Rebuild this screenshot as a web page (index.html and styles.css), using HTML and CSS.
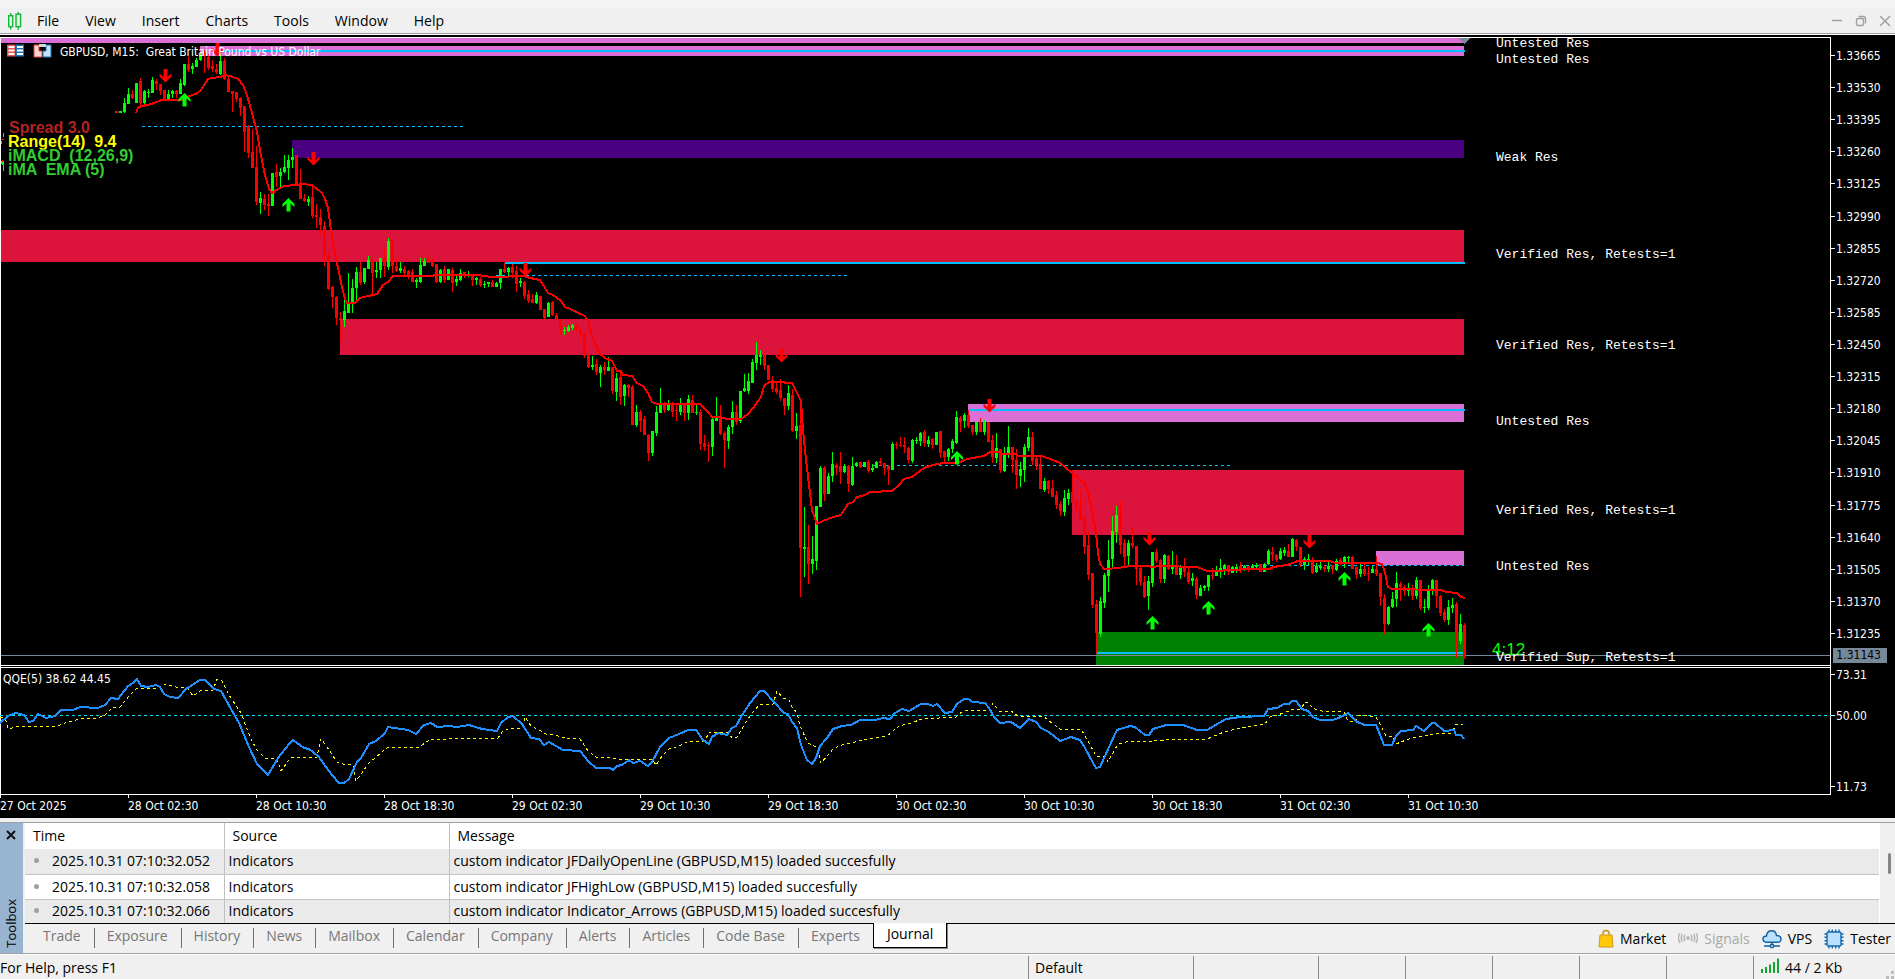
FILE: index.html
```html
<!DOCTYPE html>
<html lang="en">
<head>
<meta charset="utf-8">
<title>GBPUSD, M15</title>
<link rel="stylesheet" href="styles.css">
</head>
<body>
<header class="menubar">
  <svg class="app-icon" width="16" height="20" viewBox="0 0 16 20" fill="none" stroke="#12b73a" stroke-width="1.4"><rect x="1.7" y="4.7" width="4" height="11" fill="#dff8e2"/><path d="M3.7 2v3M3.700 15.500v3"/><rect x="9" y="3.200" width="4.600" height="12.500" fill="#dff8e2"/><path d="M11.300 1v2M11.300 15.700v3"/></svg>
  <nav class="menus">
    <button type="button">File</button><button type="button">View</button><button type="button">Insert</button><button type="button">Charts</button><button type="button">Tools</button><button type="button">Window</button><button type="button">Help</button>
  </nav>
  <div class="window-buttons">
    <button type="button" aria-label="Minimize"><svg width="12" height="12" viewBox="0 0 12 12"><path d="M1 5.500h10" stroke="#a0a0a0" stroke-width="1.500"/></svg></button>
    <button type="button" aria-label="Restore"><svg width="12" height="12" viewBox="0 0 12 12" fill="none" stroke="#a0a0a0" stroke-width="1.400"><rect x="1.500" y="3.500" width="7" height="7" rx="1.500"/><path d="M3.500 1.500h4.500q2.500 0 2.500 2.500v4.500"/></svg></button>
    <button type="button" aria-label="Close"><svg width="12" height="12" viewBox="0 0 12 12"><path d="M1 1l10 10M11 1L1 11" stroke="#a0a0a0" stroke-width="1.500"/></svg></button>
  </div>
</header>

<main class="chart">
  <svg class="plot" viewBox="0 35 1831 760" preserveAspectRatio="xMinYMin meet">
    <defs>
      <path id="up" d="M0 0L6 6V9L2 5.500V13.500H-2V5.500L-6 9V6Z" fill="#00ff00"/>
      <path id="down" d="M0 13.500L6 7.500V4.500L2 8V0H-2V8L-6 4.500V7.500Z" fill="#ff0000"/>
      <clipPath id="main-clip"><rect x="0" y="37" width="1830" height="628"/></clipPath>
    </defs>
    <g shape-rendering="crispEdges">
      <rect class="violet" x="1" y="38" width="1463" height="5"/>
      <rect class="violet" x="200" y="46" width="1264" height="10"/>
      <rect class="indigo" x="292" y="140" width="1172" height="18"/>
      <rect class="crimson" x="1" y="230" width="1463" height="32"/>
      <rect class="crimson" x="340" y="319" width="1124" height="36"/>
      <rect class="violet" x="968" y="404" width="496" height="18"/>
      <rect class="crimson" x="1072" y="470" width="392" height="65"/>
      <rect class="violet" x="1376" y="551" width="88" height="14"/>
      <rect class="green" x="1096" y="632" width="368" height="33"/>
      <path class="level" d="M218 51H1465M505 263H1465M969 410H1465M1097 653H1463"/>
      <path class="open-line" d="M142 126.500H463M496 275.500H848M855 465.500H1231M1240 565.500H1464"/>
      <path d="M0 655.500H1830" stroke="#778899"/>
      <path d="M1459 38H1470L1464.500 44Z" fill="#778899"/>
      <path d="M1 139.500H4M2.500 160V163" stroke="#ff0000"/>
      <path d="M3.500 133V137M1.500 141V144M3.500 161V171" stroke="#00ff00"/>
      <path d="M0 160L4 164V167L0 163Z" fill="#00ff00"/>
      <g id="candles" clip-path="url(#main-clip)"></g>
      <polyline class="average" points="136,113 138,108 141,106 148,105 154,103 162,100 183,100 189,96 196,94 201,90 208,79 212,78 221,77 224,75 230,76 238,79 243,85 247,95 252,113 257,132 260,150 265,175 269,189 272,193 278,189 284,186 297,185 302,184 312,185 317,189 322,193 325,199 328,208 332,238 337,263 342,287 345,299 347,303 355,303 360,298 377,294 383,285 388,282 393,276 433,276 434,275 480,275 482,276 493,277 508,277 510,276 524,276 530,278 540,280 545,288 548,293 553,295 561,301 565,307 570,309 585,316 588,321 592,337 600,354 605,358 612,361 617,371 621,371 623,375 632,376 637,383 643,386 648,393 652,402 657,404 700,404 708,412 712,417 720,417 727,419 741,419 748,414 753,408 761,397 764,386 769,382 783,382 786,383 792,383 797,393 801,401 803,430 806,460 810,493 812,510 817,524 823,521 833,517 841,515 848,504 853,502 857,497 865,495 870,492 892,491 899,485 904,479 912,477 924,468 933,465 943,463 958,463 967,459 984,456 990,452 998,452 1003,454 1015,454 1019,456 1041,456 1048,458 1060,463 1072,473 1082,481 1085,483 1088,493 1092,510 1096,533 1098,553 1100,564 1104,569 1120,568 1122,567 1133,566 1148,566 1153,567 1160,566 1197,567 1207,571 1240,570 1243,569 1270,569 1273,567 1287,565 1298,561 1330,561 1335,563 1377,563 1382,564 1385,572 1388,587 1392,589 1440,590 1447,592 1457,593 1461,597 1465,598"/>
      <path d="M0.500 795V37.500H1830.500V795M0 665.500H1831M0 667.500H1831M0 794.500H1831" fill="none" stroke="#fff"/>
      <path d="M0 715.500H1831" stroke="#00e5e5" stroke-dasharray="3 3"/>
      <polyline class="qqe-slow" points="0,717 5,718 8,728 12,728 16,726 57,726 65,723 80,719 98,718 105,715 112,708 120,707 129,696 137,688 159,688 164,684 176,687 188,688 193,696 200,691 213,690 217,679 222,681 229,695 241,713 250,737 257,750 265,758 277,759 281,771 291,757 317,757 321,739 327,747 337,762 343,764 353,765 356,781 369,763 388,747 419,747 431,739 449,739 469,738 498,738 502,732 510,728 522,728 525,717 531,726 539,730 546,734 555,735 565,738 580,739 588,751 596,757 608,757 616,759 652,759 656,765 662,756 669,749 679,746 689,741 705,741 709,732 728,732 732,738 737,737 744,725 752,713 760,704 773,704 777,691 783,698 789,700 792,707 797,713 800,726 808,743 818,748 821,763 834,748 842,745 852,743 862,740 887,736 899,726 911,723 922,719 956,717 964,710 989,710 993,703 999,711 1011,711 1018,716 1044,717 1060,729 1081,729 1089,743 1096,756 1105,756 1108,762 1118,744 1130,741 1154,741 1175,739 1207,739 1224,732 1240,728 1265,724 1270,717 1284,713 1293,709 1301,709 1305,702 1309,703 1312,708 1322,711 1344,712 1348,721 1356,721 1359,715 1376,717 1380,724 1386,736 1393,737 1396,744 1406,740 1416,737 1435,734 1452,733 1456,724 1463,724"/>
      <polyline class="qqe-fast" points="0,723 8,716 16,713 24,715 29,722 33,721 38,714 46,718 55,716 61,710 73,710 80,707 98,708 105,705 111,698 118,699 128,686 133,683 137,679 141,686 148,687 156,685 160,687 164,694 170,697 178,698 186,689 200,680 205,680 214,689 221,691 231,709 239,723 249,747 257,764 268,775 278,758 289,744 293,740 304,748 309,749 318,756 332,775 339,783 344,783 349,779 357,762 361,758 369,744 376,741 385,733 388,727 408,730 416,734 424,725 431,723 437,727 449,726 457,727 469,725 482,729 497,731 501,723 508,717 513,716 522,724 531,738 539,739 544,745 549,742 563,750 580,751 589,762 596,768 610,768 613,770 617,766 622,765 629,760 633,763 640,761 648,766 652,762 660,747 669,738 679,734 688,730 696,730 703,740 709,744 712,737 718,733 727,735 732,728 736,726 741,717 750,703 760,691 764,691 775,703 784,713 788,714 792,722 797,728 801,745 807,760 812,764 816,758 820,746 827,738 833,729 842,726 851,725 860,720 875,720 883,718 890,719 895,713 902,709 909,711 921,704 928,704 933,706 937,704 945,713 952,712 957,704 964,699 968,699 973,702 985,703 989,708 994,717 1000,723 1011,722 1020,728 1029,719 1036,722 1041,728 1049,732 1060,741 1071,737 1080,740 1085,748 1093,763 1096,768 1100,767 1109,747 1117,730 1130,726 1135,727 1145,735 1149,735 1153,729 1166,725 1183,725 1197,730 1207,730 1226,719 1240,717 1264,716 1268,709 1277,708 1284,704 1289,704 1292,701 1296,701 1302,709 1308,711 1313,717 1320,720 1333,720 1341,717 1348,713 1357,722 1365,725 1376,725 1379,732 1384,745 1392,745 1396,736 1401,731 1413,730 1416,726 1424,731 1432,723 1435,723 1444,731 1454,730 1456,735 1461,735 1464,739"/>
    </g>
    <use href="#down" x="165.500" y="69"/><use href="#down" x="217.500" y="43"/><use href="#down" x="313.500" y="152"/><use href="#down" x="525.500" y="263"/><use href="#down" x="781.500" y="349"/><use href="#down" x="989.500" y="399"/><use href="#down" x="1149.500" y="532"/><use href="#down" x="1309.500" y="535"/>
    <use href="#up" x="184.500" y="93"/><use href="#up" x="288.500" y="198"/><use href="#up" x="957" y="451"/><use href="#up" x="1152.500" y="616"/><use href="#up" x="1208.500" y="601"/><use href="#up" x="1344.500" y="572"/><use href="#up" x="1428.500" y="623"/>
    <g transform="translate(6 44)">
      <path d="M1 0.500h8.500v12H1z" fill="#e8534e"/><path d="M9.500 0.500H18v12H9.500z" fill="#2474b5"/><path d="M2.500 3h6M2.500 6.500h6M2.500 10h6M11 3h6M11 6.500h6M11 10h6" stroke="#fff" stroke-width="2"/>
    </g>
    <g transform="translate(33 44)">
      <path d="M1 1h5v6h3v6H1z" fill="#ffd4d0" stroke="#e2443e"/><path d="M18 1h-5v6h-3v6h8z" fill="#bfe2ff" stroke="#2474b5"/><path d="M6 0h7v3H6z" fill="#d8d8d8"/>
    </g>
    <text class="caption" x="60" y="56" xml:space="preserve">GBPUSD, M15:  Great Britain Pound vs US Dollar</text>
    <g class="readout">
      <text x="9" y="133" fill="#b22222">Spread 3.0</text>
      <text x="8" y="147" fill="#ffff00" xml:space="preserve">Range(14)  9.4</text>
      <text x="8" y="161" fill="#32cd32" xml:space="preserve">iMACD  (12,26,9)</text>
      <text x="8" y="175" fill="#32cd32" xml:space="preserve">iMA  EMA (5)</text>
    </g>
    <text class="timer" x="1492" y="655">4:12</text>
    <g class="zone-label">
      <text x="1496" y="47">Untested Res</text>
      <text x="1496" y="63">Untested Res</text>
      <text x="1496" y="161">Weak Res</text>
      <text x="1496" y="258">Verified Res, Retests=1</text>
      <text x="1496" y="349">Verified Res, Retests=1</text>
      <text x="1496" y="425">Untested Res</text>
      <text x="1496" y="514">Verified Res, Retests=1</text>
      <text x="1496" y="570">Untested Res</text>
      <text x="1496" y="661">Verified Sup, Retests=1</text>
    </g>
    <text class="caption" x="3" y="683">QQE(5) 38.62 44.45</text>
  </svg>
  <ul class="price-axis">
    <li>1.33665</li><li>1.33530</li><li>1.33395</li><li>1.33260</li><li>1.33125</li><li>1.32990</li><li>1.32855</li><li>1.32720</li><li>1.32585</li><li>1.32450</li><li>1.32315</li><li>1.32180</li><li>1.32045</li><li>1.31910</li><li>1.31775</li><li>1.31640</li><li>1.31505</li><li>1.31370</li><li>1.31235</li>
  </ul>
  <span class="price-now">1.31143</span>
  <ul class="qqe-axis"><li>73.31</li><li>50.00</li><li>11.73</li></ul>
  <ul class="time-axis">
    <li>27 Oct 2025</li><li>28 Oct 02:30</li><li>28 Oct 10:30</li><li>28 Oct 18:30</li><li>29 Oct 02:30</li><li>29 Oct 10:30</li><li>29 Oct 18:30</li><li>30 Oct 02:30</li><li>30 Oct 10:30</li><li>30 Oct 18:30</li><li>31 Oct 02:30</li><li>31 Oct 10:30</li>
  </ul>
</main>

<section class="toolbox">
  <div class="toolbox-strip">
    <button type="button" aria-label="Close"><svg width="10" height="10" viewBox="0 0 10 10"><path d="M1 1l8 8M9 1L1 9" stroke="#111" stroke-width="2"/></svg></button>
    <span class="toolbox-title">Toolbox</span>
  </div>
  <div class="toolbox-body">
    <div class="log">
      <table>
        <thead><tr><th class="col-time">Time</th><th class="col-source">Source</th><th>Message</th></tr></thead>
        <tbody>
          <tr><td><i class="dot"></i>2025.10.31 07:10:32.052</td><td>Indicators</td><td>custom indicator JFDailyOpenLine (GBPUSD,M15) loaded succesfully</td></tr>
          <tr><td><i class="dot"></i>2025.10.31 07:10:32.058</td><td>Indicators</td><td>custom indicator JFHighLow (GBPUSD,M15) loaded succesfully</td></tr>
          <tr><td><i class="dot"></i>2025.10.31 07:10:32.066</td><td>Indicators</td><td>custom indicator Indicator_Arrows (GBPUSD,M15) loaded succesfully</td></tr>
        </tbody>
      </table>
      <div class="scrollbar"><div class="thumb"></div></div>
    </div>
    <div class="tabbar">
      <nav class="tabs">
        <button type="button">Trade</button><button type="button">Exposure</button><button type="button">History</button><button type="button">News</button><button type="button">Mailbox</button><button type="button">Calendar</button><button type="button">Company</button><button type="button">Alerts</button><button type="button">Articles</button><button type="button">Code Base</button><button type="button">Experts</button><button type="button" class="active">Journal</button>
      </nav>
      <div class="services">
        <button type="button"><svg width="16" height="20" viewBox="0 0 16 20"><path d="M5 7V4.500Q5 1.500 8 1.500T11 4.500V7" fill="none" stroke="#c8901c" stroke-width="1.500"/><path d="M2 6h12l1 12H1z" fill="#ffc80a" stroke="#d39a10"/></svg>Market</button>
        <button type="button" class="off" disabled><svg width="20" height="20" viewBox="0 0 20 20" fill="none" stroke="#b4b4b4" stroke-width="1.400"><circle cx="10" cy="9" r="1.200"/><path d="M7 6q-2 3 0 6M13 6q2 3 0 6M4.500 5q-2.500 4 0 8M15.500 5q2.500 4 0 8M2 4q-3 5 0 10M18 4q3 5 0 10"/></svg>Signals</button>
        <button type="button"><svg width="20" height="20" viewBox="0 0 20 20" fill="none" stroke="#15609c" stroke-width="1.400"><path d="M4.500 13.300Q1 13 1 10T4.500 7Q5 1.800 9.500 1.800T14.500 6.500Q19 6.500 19 10T15.500 13.300Z" fill="#b9e0ff"/><path d="M10 13.500v3M2 17h6M12 17h6"/><circle cx="10" cy="17" r="1.700"/></svg>VPS</button>
        <button type="button"><svg width="20" height="20" viewBox="0 0 20 20" stroke="#1469ad" stroke-width="1.400"><path d="M5 .5v19M8.300.5v19M11.700.5v19M15 .5v19M.5 5h19M.5 8.300h19M.5 11.700h19M.5 15h19"/><rect x="3" y="3" width="14" height="14" rx="1.500" fill="#b9e0ff"/></svg>Tester</button>
      </div>
    </div>
  </div>
</section>

<footer class="statusbar">
  <span class="help">For Help, press F1</span>
  <span class="cell profile">Default</span>
  <span class="cell wide"></span><span class="cell"></span><span class="cell"></span><span class="cell"></span><span class="cell"></span><span class="cell"></span>
  <span class="cell traffic"><svg width="18" height="16" viewBox="0 0 18 16" fill="#12a830"><path d="M0 11h2v4H0zM4 9h2v6H4zM8 6.500h2V15H8zM12 4h2v11h-2zM16 .5h2V15h-2z"/></svg>44 / 2 Kb</span>
  <svg class="grip" width="8" height="8" viewBox="0 0 8 8" fill="#bcbcbc"><path d="M5 0h3v3H5zM5 5h3v3H5zM0 5h3v3H0z"/></svg>
</footer>
<script src="chart.js"></script>
</body>
</html>
```

FILE: styles.css
```css
* { box-sizing: border-box; }

body {
  margin: 0;
  min-height: 100vh;
  display: flex;
  flex-direction: column;
  background: #f0f0f0;
  color: #000;
  font: 14px/20px "Open Sans", "Noto Sans", sans-serif;
}

button {
  margin: 0;
  padding: 0;
  border: 0;
  background: none;
  color: inherit;
  font: inherit;
}

ul { margin: 0; padding: 0; list-style: none; }
svg { display: block; flex: none; }

/* Menu bar */
.menubar {
  flex: none;
  display: flex;
  align-items: center;
  height: 35px;
  padding: 8px 4px 0 7px;
  border-bottom: 1px solid #fff;
  box-shadow: inset 0 8px #f3f3f3, inset 0 -1px #a0a0a8;
}
.menus { display: flex; gap: 26px; padding-left: 14px; }
.window-buttons { display: flex; gap: 12px; margin-left: auto; }

/* Chart */
.chart {
  position: relative;
  flex: 1 0 auto;
  display: grid;
  grid-template-columns: minmax(0, 1fr) 64px;
  grid-template-rows: minmax(0, 1fr) 129px 23px;
  min-height: 783px;
  background: #000;
  color: #fff;
  font: 12px/16px "DejaVu Sans Condensed", "Noto Sans", sans-serif;
}
.plot { grid-area: 1 / 1 / 3 / 2; width: 100%; height: 100%; }
.violet { fill: #da70d6; }
.indigo { fill: #4b0082; }
.crimson { fill: #dc143c; }
.green { fill: #008000; }
.level { stroke: #00bfff; stroke-width: 2; }
.open-line { stroke: #00bfff; stroke-dasharray: 3 3; }
.average, .qqe-fast, .qqe-slow { fill: none; stroke: #ff0000; stroke-width: 2; }
.qqe-fast { stroke: #1e90ff; }
.qqe-slow { stroke: #ffff00; stroke-width: 1; stroke-dasharray: 3 3; }
.caption { fill: #fff; }
.readout { font: bold 16px "Liberation Sans", Arial, sans-serif; }
.timer { fill: #00ff00; font: 17px "Liberation Sans", Arial, sans-serif; }
.zone-label { fill: #fff; font: 13px "Liberation Mono", "Courier New", monospace; }

.price-axis {
  grid-area: 1 / 2;
  display: flex;
  flex-direction: column;
  justify-content: space-between;
  padding: 13px 0 24px;
}
.qqe-axis {
  grid-area: 2 / 2;
  display: grid;
  grid-template-rows: 41px 1fr 16px;
  padding-top: 1px;
}
.price-axis li::before, .qqe-axis li::before {
  content: "";
  display: inline-block;
  width: 4px;
  height: 1px;
  margin-right: 1px;
  vertical-align: 4px;
  background: #fff;
}
.price-now {
  position: absolute;
  right: 8px;
  bottom: 155px;
  padding: 0 6px 0 3px;
  background: #778899;
  color: #000;
  line-height: 15px;
}
.time-axis { grid-area: 3 / 1 / 4 / 3; display: flex; overflow: hidden; }
.time-axis li { flex: none; width: 128px; white-space: nowrap; }
.time-axis li::before { content: ""; display: block; width: 1px; height: 3px; background: #fff; }

/* Toolbox */
.toolbox {
  flex: none;
  display: flex;
  margin-top: 4px;
  border-top: 1px solid #a0a0a0;
  border-bottom: 1px solid #a0a0a0;
}
.toolbox-strip {
  display: flex;
  flex-direction: column;
  justify-content: space-between;
  align-items: center;
  width: 23px;
  padding: 7px 2px 5px 0;
  background: #99b4d1;
}
.toolbox-title { writing-mode: vertical-rl; transform: rotate(180deg); font-size: 13px; line-height: 16px; }
.toolbox-body { flex: 1; min-width: 0; padding-left: 2px; }
.log { display: flex; height: 101px; border-bottom: 1px solid #000; background: #fff; }
table { flex: 1; border-collapse: collapse; table-layout: fixed; white-space: nowrap; }
th, td { padding: 0 0 0 4px; border-left: 1px solid #c0c0c0; font-weight: normal; text-align: left; }
th { height: 26px; padding-left: 8px; }
td { height: 25px; border-bottom: 1px solid #c4c4c4; }
th:first-child, td:first-child { border-left: 0; }
.col-time { width: 199px; }
.col-source { width: 225px; }
tbody tr:nth-child(odd) { background: #eaeaea; }
tbody tr:last-child td { height: 24px; border-bottom: 0; }
.dot { display: inline-block; width: 5px; height: 5px; margin: 0 13px 3px 5px; border-radius: 50%; background: #a0a0a0; }
.scrollbar { width: 16px; padding: 30px 4px 0 8px; border-left: 1px solid #fff; background: #f0f0f0; }
.thumb { width: 3px; height: 21px; border-radius: 2px; background: #868686; }

.tabbar { display: flex; justify-content: space-between; height: 29px; }
.tabs { display: flex; align-items: flex-start; padding-left: 5px; color: #777; }
.tabs button { position: relative; height: 25px; padding: 0 13px 2px; white-space: nowrap; }
.tabs button + button:not(.active)::before { content: ""; position: absolute; left: 0; top: 4px; width: 1px; height: 20px; background: #707070; }
.tabs .active {
  margin-top: -1px;
  border: 1px solid #000;
  border-top: 0;
  background: #fff;
  box-shadow: 1px 1px #888;
  color: #000;
}
.services { display: flex; align-items: center; gap: 12px; padding-right: 4px; }
.services button { display: flex; align-items: center; gap: 6px; }
.services .off { color: #a8a8a8; }

/* Status bar */
.statusbar { flex: none; position: relative; display: flex; height: 25px; border-top: 1px solid #fff; }
.help { flex: 1; padding-top: 3px; }
.cell { width: 87px; margin-top: 1px; padding-top: 2px; border-left: 1px solid #888; }
.profile { width: 165px; padding-left: 6px; }
.wide { width: 125px; }
.traffic { display: flex; gap: 6px; width: 142px; padding-left: 7px; }
.grip { position: absolute; right: 1px; bottom: 0; }
```

FILE: chart.js
```javascript
// Candles from left to right: colour, then high, body top, body bottom, low.
const candles = `
r111 111 113 113,g111 111 113 113,g98 103 112 113,g88 94 104 104,r90 94 98 99,g83 83 103 103,r78 81 103 105,g90 91 103 104,g89 92 93 98,g77 80 93 93,
r79 81 84 90,r84 84 91 95,r90 90 100 101,g90 94 99 101,g90 91 94 98,r90 91 94 98,g79 83 94 94,g64 64 85 86,r57 64 70 72,g63 66 69 74,
g58 60 67 67,g53 55 60 61,r50 52 56 73,r54 57 68 70,r60 66 69 72,r64 69 72 74,g55 61 74 75,r58 61 79 80,r75 79 92 92,r91 91 94 112,
r92 92 99 102,r97 98 108 116,r106 106 132 152,r125 126 153 158,r129 152 168 168,r146 167 202 205,g192 198 203 214,r194 199 205 210,r194 204 206 216,g173 173 206 206,
r164 172 177 187,g168 172 176 187,g155 167 172 173,g155 160 168 180,g148 157 160 168,r155 155 184 184,r169 183 199 199,r194 198 201 202,g196 199 202 206,r187 197 216 218,
r204 215 217 228,r209 217 225 235,r221 226 256 266,r252 255 289 290,r286 287 297 308,r296 297 318 325,r312 318 320 342,g295 311 320 327,g273 302 313 313,g279 288 303 313,
g267 272 288 300,r262 272 283 285,g268 268 282 284,g256 260 269 269,r259 260 273 295,g262 270 272 278,g258 258 270 278,r249 258 266 277,g238 241 267 270,r240 240 266 273,
r258 266 271 272,g262 268 271 273,r266 269 273 275,r270 271 277 279,r269 272 282 282,g278 280 282 288,g258 265 282 283,g258 261 266 266,r255 260 263 263,r259 261 266 267,
r264 264 282 283,g269 270 282 283,r266 269 280 283,g269 269 280 280,r268 270 283 292,g275 279 282 286,g269 273 280 281,r272 272 276 278,g271 274 275 277,r275 275 280 286,
g277 278 280 285,r277 279 285 287,g281 284 285 288,g282 282 284 287,r280 282 287 287,g282 283 287 287,g269 269 283 289,r263 269 272 273,g267 268 272 276,r264 267 273 278,
r266 271 284 292,g278 281 283 287,r281 282 296 299,r290 294 301 303,r294 299 303 303,g292 295 303 304,r296 296 310 310,r309 309 318 319,g302 303 317 317,r301 302 315 316,
r313 315 320 320,r319 319 330 335,g327 330 331 335,g325 327 331 332,g324 325 328 330,r325 326 330 332,r329 329 335 337,r333 334 356 358,r354 354 367 368,g356 365 367 370,
r359 364 372 375,g365 367 373 387,r362 367 370 375,g357 367 371 371,r367 367 391 394,g373 378 392 401,r371 377 397 405,g384 385 396 406,r384 385 388 397,r385 387 425 425,
g405 412 425 427,r410 412 421 432,r416 419 435 435,r434 435 453 461,g431 431 453 456,g406 412 433 436,g388 404 413 413,r402 405 410 413,g400 404 410 411,r402 404 412 417,
r405 410 411 421,g398 404 412 415,r404 404 413 421,g395 399 413 420,r395 400 413 413,g404 412 413 415,r409 412 444 450,r435 443 447 451,r442 445 446 462,g418 419 447 456,
g397 417 421 421,r405 418 434 435,r431 433 440 468,g425 427 441 449,g401 412 427 434,r405 412 422 425,g391 391 421 423,g374 388 391 392,g373 381 391 394,g359 362 383 383,
g342 355 363 370,g350 355 357 365,r355 355 366 370,r365 365 380 380,r376 380 389 392,r381 388 392 394,r379 390 398 401,r398 398 406 415,g385 393 406 410,r389 395 431 432,
g413 426 431 439,r400 425 548 597,g507 547 549 577,r525 547 564 584,g536 559 564 574,g506 506 561 570,g466 468 507 507,r466 468 494 501,g473 476 494 494,g452 464 476 482,
r463 465 468 475,r452 466 472 484,g464 466 472 473,r465 466 484 492,g457 466 485 486,g462 463 466 467,r462 462 467 468,g462 462 467 467,r460 462 471 473,g464 468 470 472,
g461 462 468 468,r458 461 463 466,r463 463 468 475,r465 466 470 485,g442 444 470 470,r442 444 445 449,r437 445 446 447,r437 445 447 453,r447 448 460 463,g439 440 461 463,
g437 440 441 444,g432 433 441 446,r430 432 443 447,g436 440 444 447,r438 439 445 449,g432 432 445 445,r431 431 453 458,r451 451 457 463,g448 449 457 461,g439 441 449 453,
g411 417 443 444,r416 418 422 432,g413 415 421 428,r410 415 426 428,r425 425 432 435,g422 422 432 435,r418 422 432 432,g420 422 432 435,r422 422 442 442,r435 440 457 463,
g433 448 458 463,r449 449 470 473,g447 454 471 472,g426 447 455 458,r447 447 460 473,r449 460 475 489,g462 469 476 487,g444 447 470 482,g428 437 448 451,r432 437 461 465,
r456 458 465 470,r456 464 489 489,g478 481 490 492,r480 481 489 494,r480 488 497 497,r491 495 505 509,r501 504 511 516,g490 498 512 516,g489 493 499 505,r470 492 503 503,
r500 501 507 513,r489 507 519 520,r516 518 547 554,r531 545 575 580,r573 573 605 608,r600 604 633 654,g597 601 634 637,g573 575 603 608,g540 560 576 592,g516 531 559 568,
g506 515 532 543,r501 514 545 554,r539 543 557 568,g540 543 556 565,r528 543 546 548,r546 546 569 585,r566 568 582 586,r576 582 597 598,g576 581 596 610,g552 552 583 587,
r549 552 561 563,r559 560 579 583,g554 555 579 583,r555 556 569 570,g551 566 569 574,r555 566 575 575,g565 567 575 579,r558 566 572 577,r567 572 582 584,g573 578 581 586,
r577 579 595 599,g585 588 596 596,g585 586 588 591,g575 575 587 591,r568 575 576 580,g566 571 576 576,g559 568 572 578,g564 565 570 575,r565 565 572 575,g566 567 573 573,
g564 567 569 573,r562 566 569 573,g565 566 569 571,r566 566 569 572,g564 566 568 568,g563 565 567 568,r564 564 572 572,g563 564 572 572,g549 551 564 565,r547 552 555 561,
r554 555 560 562,g548 551 559 560,g547 550 553 556,r544 551 557 557,g538 539 557 557,r539 540 547 551,r547 547 565 567,g557 559 565 570,g554 559 561 565,r557 560 573 574,
g563 566 572 573,g562 566 568 570,r565 567 569 572,g562 566 569 572,r565 565 569 574,g559 561 570 571,r558 560 563 565,g556 557 563 568,g556 557 558 562,r556 557 569 569,
r567 567 575 579,g564 569 574 577,r563 569 574 576,r567 573 574 581,g566 569 573 573,r556 569 574 576,r573 573 597 606,r594 598 624 634,g606 607 624 625,g592 599 607 608,
g572 583 599 607,r582 584 587 601,r585 587 591 596,g583 590 591 596,r585 590 596 600,g577 580 596 599,r580 580 608 610,g599 607 608 613,g585 590 608 610,g579 580 590 595,
r580 580 596 608,r595 596 613 616,r609 612 620 622,g600 607 620 625,g598 605 608 613,r602 604 641 658,g614 624 641 644,r623 625 656 659`;

const firstX = 116;
const step = 4;
const colours = { r: "#ff0000", g: "#00ff00" };
const paths = { r: "", g: "" };

candles.trim().split(/,\s*/).forEach((entry, i) => {
  const [high, top, bottom, low] = entry.slice(1).split(" ").map(Number);
  const x = firstX + i * step;
  paths[entry[0]] += `M${x} ${high}h1V${low}h-1ZM${x - 1} ${top}h3V${bottom}h-3Z`;
});

const layer = document.getElementById("candles");
for (const key of Object.keys(paths)) {
  const path = document.createElementNS("http://www.w3.org/2000/svg", "path");
  path.setAttribute("d", paths[key]);
  path.setAttribute("fill", colours[key]);
  layer.append(path);
}
```
